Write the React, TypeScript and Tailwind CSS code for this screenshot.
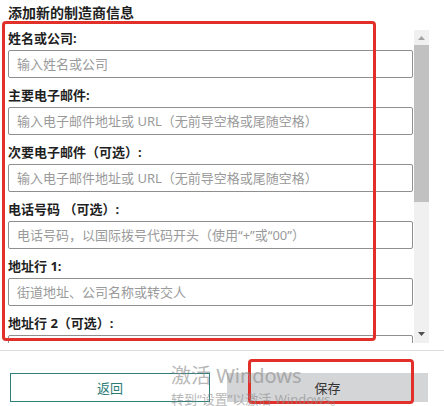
import React from "react";

const fields: { label: string; placeholder: string }[] = [
  { label: "姓名或公司:", placeholder: "输入姓名或公司" },
  { label: "主要电子邮件:", placeholder: "输入电子邮件地址或 URL（无前导空格或尾随空格）" },
  { label: "次要电子邮件（可选）:", placeholder: "输入电子邮件地址或 URL（无前导空格或尾随空格）" },
  { label: "电话号码 （可选）:", placeholder: "电话号码，以国际拨号代码开头（使用“+”或“00”）" },
  { label: "地址行 1:", placeholder: "街道地址、公司名称或转交人" },
  { label: "地址行 2（可选）:", placeholder: "" },
];

function Field({ label, placeholder }: { label: string; placeholder: string }) {
  return (
    <div className="flex flex-col">
      <div className="h-[29px] flex items-end pb-[4px] text-[13px] leading-[16px] font-bold text-[#1f1f1f]">
        {label}
      </div>
      <input
        readOnly
        placeholder={placeholder}
        className="h-[28px] w-[405px] border border-[#8f8f8f] rounded-[2px] px-[8px] text-[13px] text-[#333] placeholder:text-[#9a9a9a] outline-none bg-white"
      />
    </div>
  );
}

function Scrollbar() {
  return (
    <div className="w-[15px] flex flex-col bg-[#f0f0f0]">
      <div className="h-[15px] flex items-center justify-center">
        <svg width="7" height="4" viewBox="0 0 7 4">
          <path d="M0 4 L3.5 0 L7 4 Z" fill="#a3a3a3" />
        </svg>
      </div>
      <div className="h-[157px] bg-[#c1c1c1]" />
      <div className="flex-1" />
      <div className="h-[15px] flex items-start justify-center pt-[4px]">
        <svg width="7" height="4" viewBox="0 0 7 4">
          <path d="M0 0 L7 0 L3.5 4 Z" fill="#505050" />
        </svg>
      </div>
    </div>
  );
}

export default function App() {
  return (
    <div
      className="relative w-[444px] h-[406px] bg-white overflow-hidden"
      style={{ fontFamily: '"Noto Sans", "Noto Sans CJK SC", sans-serif' }}
    >
      <div className="h-[30px] px-[8px] pt-[4px] text-[14px] leading-[18px] font-bold text-[#1f1f1f]">
        添加新的制造商信息
      </div>
      <div className="flex h-[313px]">
        <div className="w-[414px] overflow-hidden pl-[8px]">
          <div className="-mt-[9px] flex flex-col">
            {fields.map((f) => (
              <Field key={f.label} label={f.label} placeholder={f.placeholder} />
            ))}
          </div>
        </div>
        <Scrollbar />
      </div>
      <div className="mt-[7px] border-t border-[#dedede]" />
      <div className="flex pt-[22px] pl-[10px] gap-[17px]">
        <button className="w-[200px] h-[29px] border border-[#2f7f7d] text-[#2a7a78] text-[13px] leading-[16px] bg-white">
          返回
        </button>
        <button className="w-[201px] h-[29px] bg-[#d4d5d7] text-[#333] text-[13px] leading-[16px]">
          保存
        </button>
      </div>

      {/* annotation boxes */}
      <div className="absolute left-[2px] top-[21px] w-[374px] h-[320px] border-[3px] border-[#e1302a] rounded-[4px] pointer-events-none" />
      <div className="absolute left-[248px] top-[359px] w-[166px] h-[45px] border-[3px] border-[#e1302a] rounded-[4px] pointer-events-none" />

      {/* windows watermark */}
      <div className="absolute left-[171px] top-[364px] pointer-events-none text-[#8a8a8a] opacity-60">
        <div className="text-[20px] leading-[24px]">激活 Windows</div>
        <div className="text-[13px] leading-[16px] mt-[3px]">转到“设置”以激活 Windows。</div>
      </div>
    </div>
  );
}
